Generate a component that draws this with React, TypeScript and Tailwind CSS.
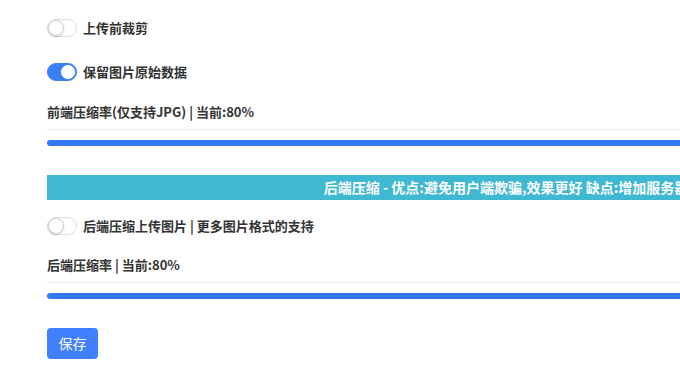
import { useState } from 'react';

const Toggle = ({ on, onClick }: { on: boolean; onClick: () => void }) => (
  <button
    onClick={onClick}
    className={`relative h-[18px] w-[30px] shrink-0 rounded-full border ${
      on ? 'border-[#3b7ff5] bg-[#3b7ff5]' : 'border-[#dcdcdc] bg-white'
    }`}
  >
    <span
      className={`absolute top-[0px] h-[16px] w-[16px] rounded-full border bg-white ${
        on ? 'right-[0px] border-[#3b7ff5]' : 'left-[0px] border-[#d0d0d0] shadow-[0_1px_2px_rgba(0,0,0,0.15)]'
      }`}
    />
  </button>
);

const Slider = ({ value }: { value: number }) => (
  <div className="border-t border-[#ececec] pt-[10px]">
    <div className="h-[6px] w-full rounded-l-full bg-[#3478f6]" data-value={value} />
  </div>
);

const App = () => {
  const [crop, setCrop] = useState(false);
  const [keepMeta, setKeepMeta] = useState(true);
  const [serverCompress, setServerCompress] = useState(false);

  return (
    <div
      className="h-[366px] w-[680px] overflow-hidden bg-white text-[13px] font-semibold text-[#333]"
      style={{ fontFamily: '"Noto Sans CJK SC", "Noto Sans", sans-serif' }}
    >
      <div className="w-[993px] pl-[47px] pt-[19px]">
        <div className="flex h-[18px] items-center gap-[6px]">
          <Toggle on={crop} onClick={() => setCrop(!crop)} />
          <span>上传前裁剪</span>
        </div>

        <div className="mt-[26px] flex h-[18px] items-center gap-[6px]">
          <Toggle on={keepMeta} onClick={() => setKeepMeta(!keepMeta)} />
          <span>保留图片原始数据</span>
        </div>

        <div className="mt-[22px] leading-[18px]">前端压缩率(仅支持JPG) | 当前:80%</div>
        <div className="mt-[8px]">
          <Slider value={80} />
        </div>

        <div className="mt-[29px] flex h-[25px] items-center justify-center bg-[#3fb8d1] text-[14px] font-bold text-white">
          后端压缩 - 优点:避免用户端欺骗,效果更好 缺点:增加服务器压力
        </div>

        <div className="mt-[17px] flex h-[18px] items-center gap-[6px]">
          <Toggle on={serverCompress} onClick={() => setServerCompress(!serverCompress)} />
          <span>后端压缩上传图片 | 更多图片格式的支持</span>
        </div>

        <div className="mt-[21px] leading-[18px]">后端压缩率 | 当前:80%</div>
        <div className="mt-[8px]">
          <Slider value={80} />
        </div>

        <button className="mt-[29px] h-[31px] w-[51px] rounded-[4px] bg-[#4080ff] text-[14px] font-normal text-white">
          保存
        </button>
      </div>
    </div>
  );
};

export default App;
